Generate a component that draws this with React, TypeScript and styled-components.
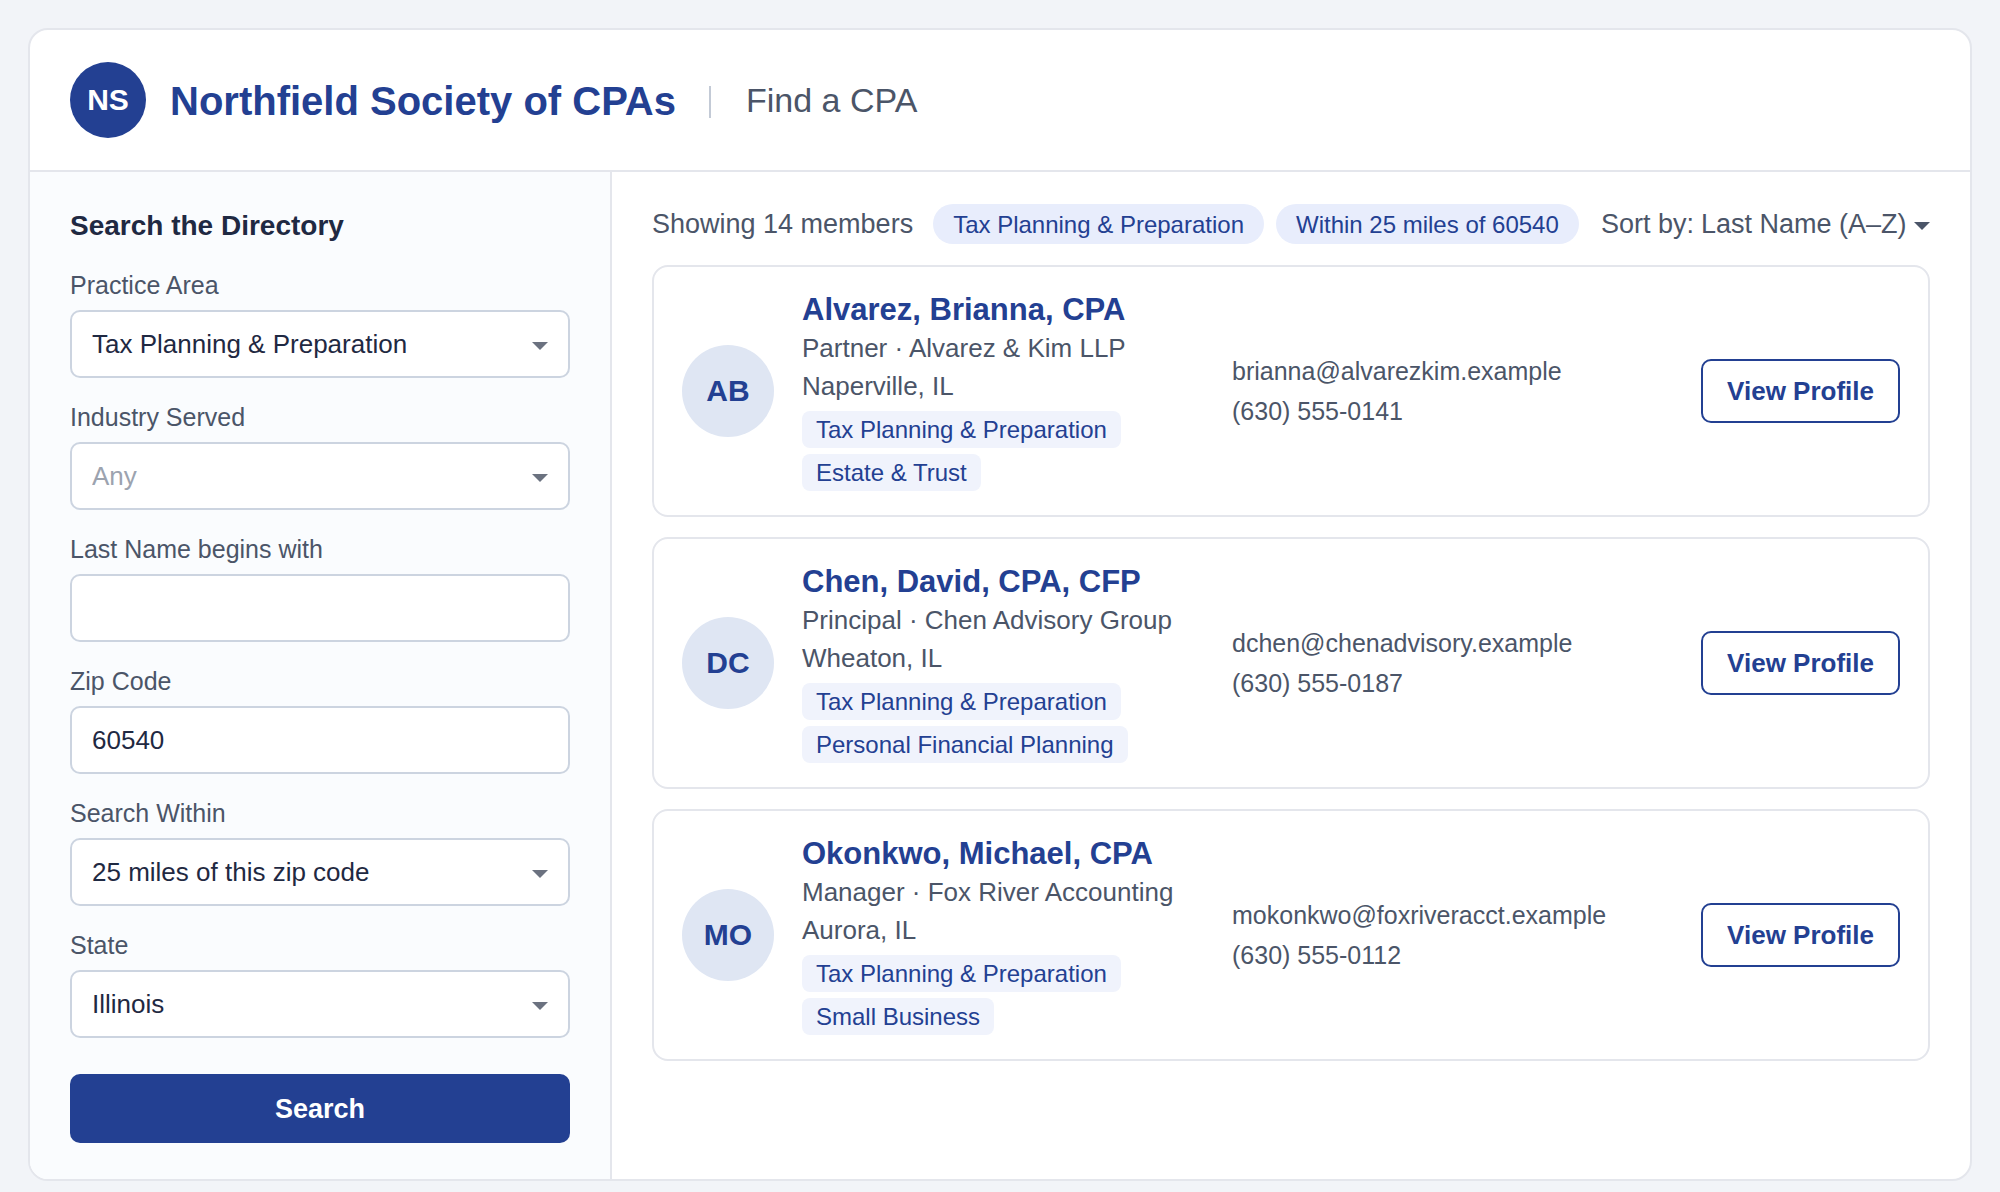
import React from "react";
import styled, { createGlobalStyle } from "styled-components";

const primary = "#234092";
const ink = "#1f2942";
const muted = "#4b5568";
const line = "#e4e6ec";

const GlobalStyle = createGlobalStyle`
  *, *::before, *::after { box-sizing: border-box; }
  body {
    margin: 0;
    background: #f2f4f8;
    color: ${muted};
    font-family: "Liberation Sans", Arial, sans-serif;
    font-size: 26px;
    line-height: 30px;
  }
  h1, h2, h3, p, ul { margin: 0; padding: 0; }
  ul { list-style: none; }
  button, input, select { font: inherit; margin: 0; }
`;

const Page = styled.div`
  padding: 28px 28px 10px;
`;

const Panel = styled.div`
  background: #fff;
  border: 2px solid ${line};
  border-radius: 20px;
  overflow: hidden;
`;

const Header = styled.header`
  display: flex;
  align-items: center;
  padding: 32px 40px;
  border-bottom: 2px solid ${line};
`;

const Circle = styled.div<{ $size: number; $solid?: boolean }>`
  display: flex;
  flex: none;
  align-items: center;
  justify-content: center;
  width: ${(p) => p.$size}px;
  height: ${(p) => p.$size}px;
  border-radius: 50%;
  background: ${(p) => (p.$solid ? primary : "#dfe6f3")};
  color: ${(p) => (p.$solid ? "#fff" : primary)};
  font-size: 30px;
  font-weight: 700;
`;

const Title = styled.h1`
  margin-left: 24px;
  padding-top: 2px;
  color: ${primary};
  font-size: 40px;
  line-height: 48px;
`;

const Divider = styled.span`
  width: 2px;
  height: 32px;
  margin: 4px 35px 0 33px;
  background: #c3cad6;
`;

const Section = styled.p`
  font-size: 34px;
  line-height: 40px;
`;

const Body = styled.div`
  display: grid;
  grid-template-columns: 582px minmax(0, 1fr);
`;

const Sidebar = styled.form`
  display: flex;
  flex-direction: column;
  gap: 24px;
  padding: 36px 40px;
  background: #fafcfe;
  border-right: 2px solid ${line};
`;

const SidebarTitle = styled.h2`
  margin-bottom: 2px;
  color: ${ink};
  font-size: 28px;
  line-height: 36px;
`;

const Field = styled.div`
  display: flex;
  flex-direction: column;
  gap: 10px;
`;

const FieldLabel = styled.label`
  font-size: 25px;
`;

const SelectBox = styled.div`
  display: grid;
  align-items: center;
  & > * { grid-area: 1 / 1; }
`;

const control = `
  width: 100%;
  height: 68px;
  padding: 0 20px;
  border: 2px solid #ccd4e0;
  border-radius: 10px;
  background: #fff;
`;

const Select = styled.select<{ $placeholder?: boolean }>`
  ${control}
  appearance: none;
  color: ${(p) => (p.$placeholder ? "#9ca3af" : ink)};
`;

const TextInput = styled.input`
  ${control}
  color: ${ink};
`;

const Arrow = styled.svg`
  display: block;
  width: 16px;
  height: 8px;
  fill: currentColor;
  pointer-events: none;
`;

const FieldArrow = styled(Arrow)`
  justify-self: end;
  margin: 4px 22px 0 0;
  color: #6b7280;
`;

const SortArrow = styled(Arrow)`
  margin-top: 4px;
`;

const SearchButton = styled.button`
  height: 69px;
  margin-top: 12px;
  border: 0;
  border-radius: 10px;
  background: ${primary};
  color: #fff;
  font-size: 27px;
  font-weight: 700;
`;

const Results = styled.main`
  padding: 32px 40px;
`;

const Toolbar = styled.div`
  display: flex;
  align-items: center;
  margin-bottom: 21px;
  font-size: 27px;
`;

const Chips = styled.ul`
  display: flex;
  gap: 12px;
  margin-left: 20px;
`;

const Chip = styled.li`
  padding: 6px 20px 4px;
  border-radius: 20px;
  background: #e8edfc;
  color: ${primary};
  font-size: 24px;
  white-space: nowrap;
`;

const Sort = styled.div`
  display: flex;
  align-items: center;
  gap: 7px;
  margin-left: auto;
  white-space: nowrap;
`;

const SortSelect = styled.select`
  appearance: none;
  padding: 0;
  border: 0;
  background: none;
  color: inherit;
`;

const Cards = styled.ul`
  display: grid;
  gap: 20px;
`;

const Card = styled.li`
  display: grid;
  grid-template-columns: 92px 402px minmax(0, 1fr) auto;
  align-items: center;
  gap: 28px;
  padding: 24px 28px;
  border: 2px solid ${line};
  border-radius: 16px;
`;

const Name = styled.h3`
  color: ${primary};
  font-size: 31px;
  line-height: 38px;
`;

const Detail = styled.p`
  line-height: 38px;
`;

const Tags = styled.ul`
  display: flex;
  flex-wrap: wrap;
  gap: 6px;
  margin-top: 6px;
`;

const Tag = styled.li`
  padding: 0 14px;
  border-radius: 8px;
  background: #f0f3fc;
  color: ${primary};
  font-size: 24px;
  line-height: 37px;
`;

const Contact = styled.address`
  display: flex;
  flex-direction: column;
  align-items: flex-start;
  font-size: 25px;
  font-style: normal;
  line-height: 40px;
`;

const ContactLink = styled.a`
  color: inherit;
  text-decoration: none;
`;

const ProfileButton = styled.button`
  height: 64px;
  padding: 0 24px;
  border: 2px solid ${primary};
  border-radius: 10px;
  background: #fff;
  color: ${primary};
  font-weight: 700;
  white-space: nowrap;
`;

const Triangle = () => <path d="M0 0h16L8 8z" />;

type FieldDef = { id: string; label: string; value: string; kind: "select" | "text" };

const fields: FieldDef[] = [
  { id: "practice", label: "Practice Area", value: "Tax Planning & Preparation", kind: "select" },
  { id: "industry", label: "Industry Served", value: "Any", kind: "select" },
  { id: "lastname", label: "Last Name begins with", value: "", kind: "text" },
  { id: "zip", label: "Zip Code", value: "60540", kind: "text" },
  { id: "within", label: "Search Within", value: "25 miles of this zip code", kind: "select" },
  { id: "state", label: "State", value: "Illinois", kind: "select" },
];

const members = [
  {
    initials: "AB",
    name: "Alvarez, Brianna, CPA",
    role: "Partner · Alvarez & Kim LLP",
    city: "Naperville, IL",
    tags: ["Tax Planning & Preparation", "Estate & Trust"],
    email: "brianna@alvarezkim.example",
    phone: "(630) 555-0141",
  },
  {
    initials: "DC",
    name: "Chen, David, CPA, CFP",
    role: "Principal · Chen Advisory Group",
    city: "Wheaton, IL",
    tags: ["Tax Planning & Preparation", "Personal Financial Planning"],
    email: "dchen@chenadvisory.example",
    phone: "(630) 555-0187",
  },
  {
    initials: "MO",
    name: "Okonkwo, Michael, CPA",
    role: "Manager · Fox River Accounting",
    city: "Aurora, IL",
    tags: ["Tax Planning & Preparation", "Small Business"],
    email: "mokonkwo@foxriveracct.example",
    phone: "(630) 555-0112",
  },
];

export default function App() {
  return (
    <Page>
      <GlobalStyle />
      <Panel>
        <Header>
          <Circle $size={76} $solid>NS</Circle>
          <Title>Northfield Society of CPAs</Title>
          <Divider />
          <Section>Find a CPA</Section>
        </Header>
        <Body>
          <Sidebar onSubmit={(e) => e.preventDefault()}>
            <SidebarTitle>Search the Directory</SidebarTitle>
            {fields.map((f) => (
              <Field key={f.id}>
                <FieldLabel htmlFor={f.id}>{f.label}</FieldLabel>
                {f.kind === "select" ? (
                  <SelectBox>
                    <Select id={f.id} $placeholder={f.value === "Any"}>
                      <option>{f.value}</option>
                    </Select>
                    <FieldArrow viewBox="0 0 16 8" aria-hidden="true">
                      <Triangle />
                    </FieldArrow>
                  </SelectBox>
                ) : (
                  <TextInput id={f.id} type="text" defaultValue={f.value} />
                )}
              </Field>
            ))}
            <SearchButton type="submit">Search</SearchButton>
          </Sidebar>
          <Results>
            <Toolbar>
              <p>Showing 14 members</p>
              <Chips>
                <Chip>Tax Planning &amp; Preparation</Chip>
                <Chip>Within 25 miles of 60540</Chip>
              </Chips>
              <Sort>
                <label htmlFor="sort">Sort by:</label>
                <SortSelect id="sort">
                  <option>Last Name (A–Z)</option>
                </SortSelect>
                <SortArrow viewBox="0 0 16 8" aria-hidden="true">
                  <Triangle />
                </SortArrow>
              </Sort>
            </Toolbar>
            <Cards>
              {members.map((m) => (
                <Card key={m.initials}>
                  <Circle $size={92}>{m.initials}</Circle>
                  <div>
                    <Name>{m.name}</Name>
                    <Detail>{m.role}</Detail>
                    <Detail>{m.city}</Detail>
                    <Tags>
                      {m.tags.map((t) => (
                        <Tag key={t}>{t}</Tag>
                      ))}
                    </Tags>
                  </div>
                  <Contact>
                    <ContactLink href={`mailto:${m.email}`}>{m.email}</ContactLink>
                    <span>{m.phone}</span>
                  </Contact>
                  <ProfileButton type="button">View Profile</ProfileButton>
                </Card>
              ))}
            </Cards>
          </Results>
        </Body>
      </Panel>
    </Page>
  );
}
